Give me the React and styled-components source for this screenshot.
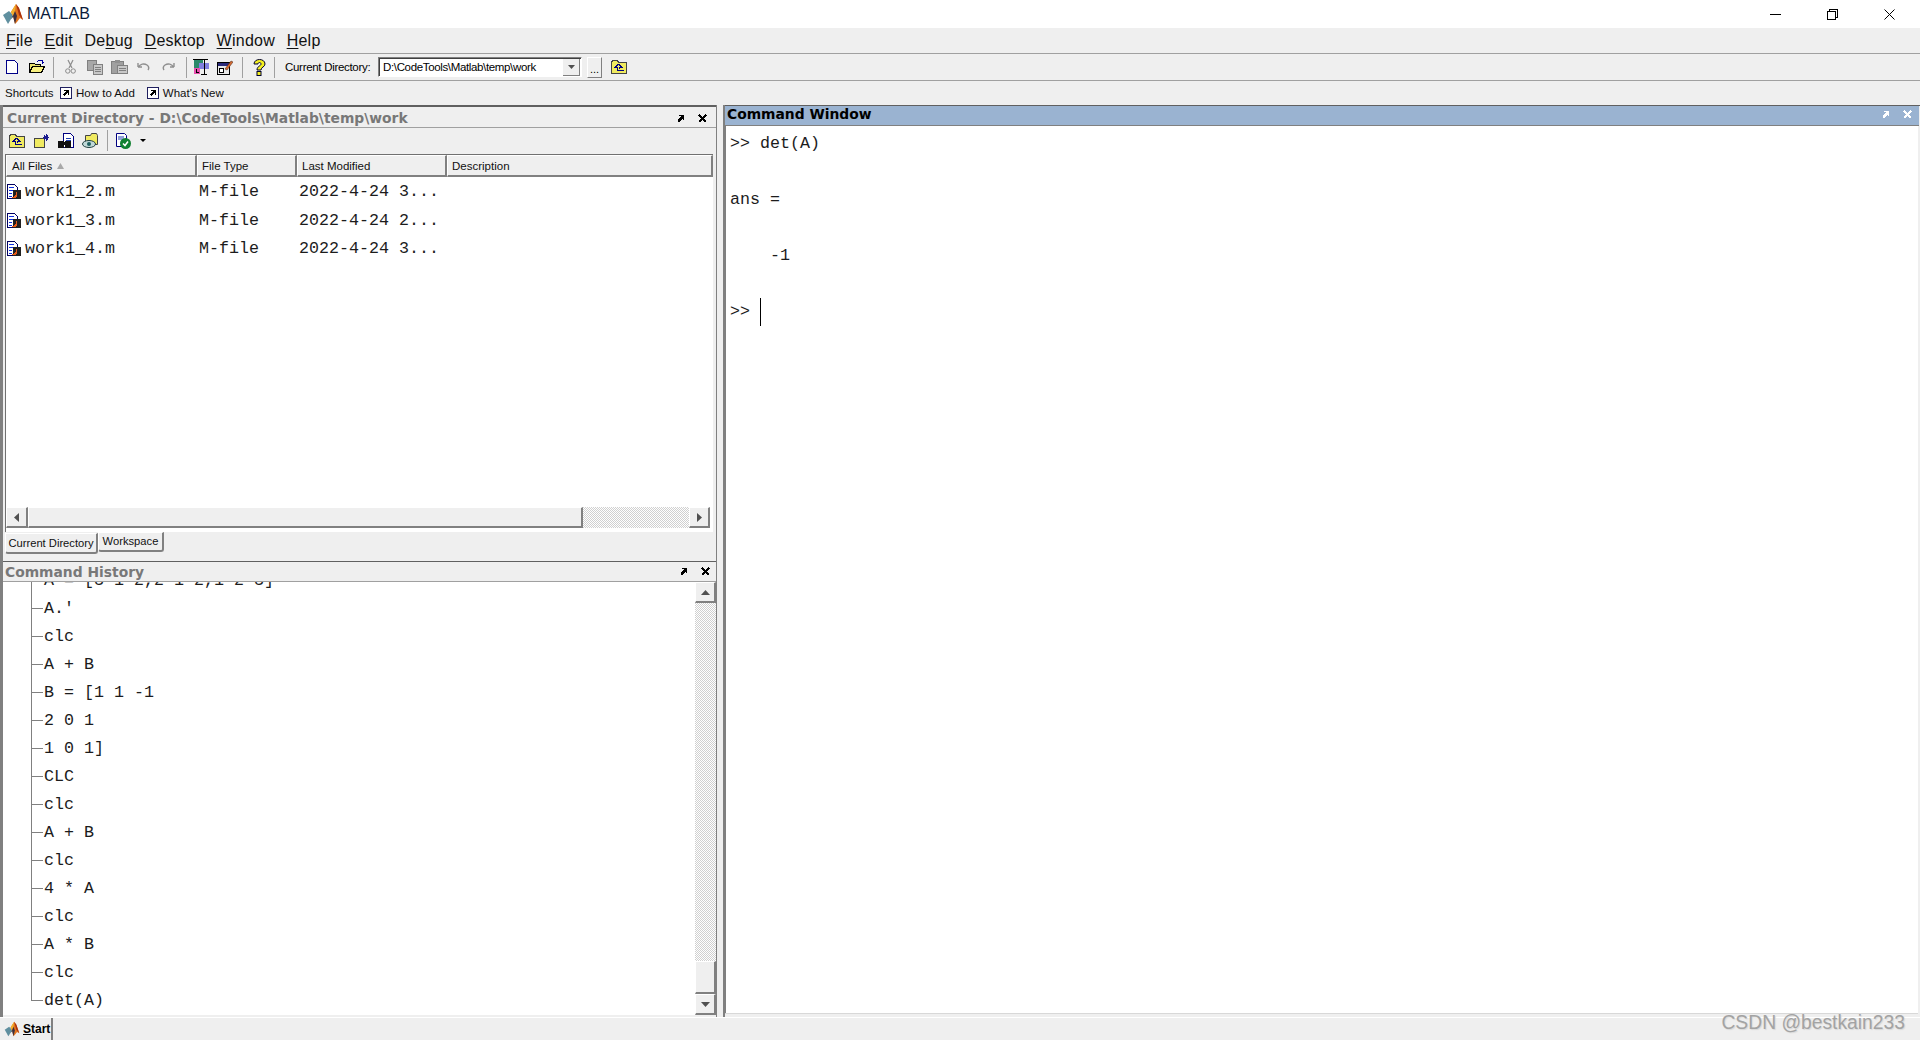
import React from 'react'
import styled, { createGlobalStyle } from 'styled-components'

const GlobalStyle = createGlobalStyle`
    html, body {
        margin: 0;
        padding: 0;
        background: #efefef;
        overflow: hidden;
    }
`

const MONO = '"Liberation Mono", "DejaVu Sans Mono", monospace'
const UI = '"Liberation Sans", Arial, sans-serif'
const TITLE = '"DejaVu Sans", Verdana, sans-serif'

const Page = styled.div`
    width: 1920px;
    height: 1040px;
    display: flex;
    flex-direction: column;
    position: relative;
    overflow: hidden;
    background: #efefef;
    font-family: ${UI};
    color: #000;
`

const TitleBar = styled.div`
    height: 28px;
    background: #fff;
    display: flex;
    align-items: center;
    padding: 0 2px;
`
const AppName = styled.span`
    font-size: 16px;
    color: #0a1a3a;
    margin-left: 3px;
    flex: 1;
`
const WinButton = styled.div`
    width: 57px;
    height: 28px;
    display: flex;
    align-items: center;
    justify-content: center;
`

const MenuBar = styled.div`
    height: 25px;
    border-bottom: 1px solid #a0a0a0;
    display: flex;
    align-items: center;
    gap: 11.6px;
    padding-left: 6px;
    font-size: 16px;
    letter-spacing: 0.25px;
    color: #111;
`
const MenuKey = styled.span`
    text-decoration: underline;
    text-underline-offset: 2px;
`

const ToolBar = styled.div`
    height: 26px;
    border-bottom: 1px solid #a0a0a0;
    display: flex;
    align-items: center;
`
const ToolButton = styled.div`
    width: 24.5px;
    height: 22px;
    display: flex;
    align-items: center;
    justify-content: center;
`
const Separator = styled.div`
    width: 1px;
    height: 21px;
    background: #a0a0a0;
    margin: 0 ${p => p.$after ?? 4}px 0 ${p => p.$before ?? 4}px;
`
const ToolLabel = styled.span`
    font-size: 11.5px;
    letter-spacing: -0.3px;
    width: 85px;
    white-space: nowrap;
    margin: 0 8px 0 10px;
`
const Combo = styled.div`
    width: 204px;
    height: 20px;
    box-sizing: border-box;
    background: #fff;
    border: 1px solid;
    border-color: #808080 #fff #fff #808080;
    box-shadow: inset 1px 1px 0 #404040;
    display: flex;
    align-items: center;
    justify-content: space-between;
    font-size: 11.5px;
    padding-left: 4px;
    letter-spacing: -0.35px;
`
const ComboArrow = styled.div`
    width: 17px;
    height: 17px;
    background: #efefef;
    border-right: 1px solid #808080;
    border-bottom: 1px solid #808080;
    box-sizing: border-box;
    margin-right: 1px;
    display: flex;
    align-items: center;
    justify-content: center;
`
const BrowseButton = styled.div`
    width: 15px;
    height: 21px;
    box-sizing: border-box;
    margin: 0 9px 0 5px;
    border: 1px solid;
    border-color: #fff #808080 #808080 #fff;
    font-size: 11px;
    text-align: center;
    line-height: 22px;
`

const ShortcutBar = styled.div`
    height: 24px;
    display: flex;
    align-items: center;
    padding-left: 5px;
    font-size: 11.5px;
    color: #111;
`
const ShortcutTitle = styled.span`
    width: 55px;
`
const ShortcutLink = styled.span`
    display: flex;
    align-items: center;
    gap: 4px;
    margin-right: 12px;
`

const Desk = styled.div`
    flex: 1;
    min-height: 0;
    display: flex;
`
const LeftColumn = styled.div`
    width: 717px;
    display: flex;
    flex-direction: column;
    border-left: 3px solid #808080;
    box-sizing: border-box;
    border-right: 1px solid #808080;
`
const Splitter = styled.div`
    width: 6px;
    border-right: 2px solid #808080;
`
const RightColumn = styled.div`
    flex: 1;
    display: flex;
    flex-direction: column;
    padding-right: 1px;
    border-top: 1px solid #606060;
`

const DirPanel = styled.div`
    height: 456px;
    flex: none;
    display: flex;
    flex-direction: column;
    border-top: 2px solid #606060;
    box-sizing: border-box;
`
const PanelTitle = styled.div`
    height: ${p => p.$h || 21}px;
    flex: none;
    box-sizing: border-box;
    display: flex;
    align-items: center;
    font-family: ${TITLE};
    font-weight: bold;
    font-size: 13.85px;
    padding: ${p => p.$drop ?? 0}px ${p => p.$inset ?? 0}px ${p => p.$lift ?? 0}px ${p => p.$lead ?? 2}px;
    color: ${p => (p.$active ? '#000' : '#787878')};
    background: ${p => (p.$active ? '#9ab3d1' : '#efefef')};
    border-bottom: 1px solid ${p => (p.$active ? '#808080' : '#a0a0a0')};
`
const TitleText = styled.span`
    flex: 1;
    white-space: pre;
`
const TitleIcon = styled.span`
    width: 22px;
    height: 12px;
    display: flex;
    align-items: center;
    justify-content: center;
`

const DirTools = styled.div`
    height: 25px;
    flex: none;
    display: flex;
    align-items: center;
    padding-left: 2px;
`
const DirTool = styled.div`
    width: 24.5px;
    display: flex;
    justify-content: center;
`
const DirMenuArrow = styled.div`
    margin-left: 4px;
`

const FileTable = styled.div`
    flex: none;
    height: 377px;
    margin: 1px 3px 0 2px;
    border-top: 1px solid #707070;
    border-left: 1px solid #707070;
    background: #fff;
    display: flex;
    flex-direction: column;
`
const HeaderRow = styled.div`
    display: grid;
    grid-template-columns: 191px 100px 150px 1fr;
    height: 22px;
    flex: none;
`
const HeaderCell = styled.div`
    box-sizing: border-box;
    background: #efefef;
    border: 1px solid;
    border-color: #fff #808080 #808080 #fff;
    border-width: 1px 2px 2px 1px;
    font-size: 11.5px;
    display: flex;
    align-items: center;
    gap: 5px;
    padding-left: ${p => p.$pad || 4}px;
    color: #111;
`
const FileList = styled.div`
    flex: 1;
`
const FileRow = styled.div`
    display: grid;
    grid-template-columns: 191px 100px 150px;
    height: 28.7px;
    align-items: center;
    font-family: ${MONO};
    font-size: 16.67px;
    color: #1c1c1c;
    white-space: pre;
`
const FileName = styled.div`
    display: flex;
    align-items: center;
    gap: 4px;
    padding-left: 1px;
`
const FileCell = styled.div`
    padding-left: 2px;
`

const HScroll = styled.div`
    height: 21px;
    flex: none;
    margin: 0 3px 4px 0;
    display: flex;
    align-items: stretch;
`
const ScrollButton = styled.div`
    box-sizing: border-box;
    width: ${p => p.$w || 21}px;
    height: ${p => (p.$vertical ? `${p.$h || 21}px` : 'auto')};
    flex: none;
    background: #efefef;
    border: solid;
    border-width: 1px 2px 2px 1px;
    border-color: #fff #808080 #808080 #fff;
    display: flex;
    align-items: center;
    justify-content: center;
`
const Track = styled.div`
    flex: 1;
    min-width: 0;
    min-height: 0;
    background-image: conic-gradient(#fff 25%, #d0d0d0 0 50%, #fff 0 75%, #d0d0d0 0);
    background-size: 2px 2px;
`
const HThumb = styled.div`
    box-sizing: border-box;
    flex: none;
    width: 555px;
    background: #efefef;
    border: solid;
    border-width: 1px 2px 2px 1px;
    border-color: #fff #808080 #808080 #fff;
`

const TabStrip = styled.div`
    height: 25px;
    flex: none;
    display: flex;
    align-items: flex-start;
    padding-left: 2px;
`
const Tab = styled.div`
    box-sizing: border-box;
    font-size: 11.2px;
    height: ${p => (p.$raised ? 20 : 21)}px;
    width: ${p => p.$w}px;
    margin-top: ${p => (p.$raised ? 0 : 1)}px;
    text-align: center;
    line-height: ${p => (p.$raised ? 17 : 19)}px;
    border: solid;
    border-width: 1px 2px 2px 1px;
    border-color: #fff #808080 #808080 #fff;
    border-radius: 0 0 3px 3px;
    color: #111;
`

const HistoryPanel = styled.div`
    flex: 1;
    min-height: 0;
    display: flex;
    flex-direction: column;
    border-top: 1px solid #606060;
`
const HistoryBody = styled.div`
    flex: none;
    height: 433px;
    display: flex;
    background: #fff;
`
const HistoryList = styled.div`
    flex: 1;
    min-width: 0;
    overflow: hidden;
    display: flex;
    flex-direction: column;
    justify-content: flex-end;
    padding-left: 28px;
`
const HistoryRow = styled.div`
    height: 28.02px;
    flex: none;
    display: flex;
    align-items: center;
    font-family: ${MONO};
    font-size: 16.67px;
    color: #1c1c1c;
    white-space: pre;
`
const Branch = styled.span`
    width: 12px;
    height: ${p => (p.$last ? '50%' : '100%')};
    align-self: flex-start;
    flex: none;
    box-sizing: border-box;
    border-left: 1px solid #808080;
    border-bottom: ${p => (p.$last ? '1px solid #808080' : 'none')};
    background: ${p => (p.$last ? 'none' : 'linear-gradient(#808080, #808080) 0 50% / 100% 1px no-repeat')};
    margin-right: 1px;
`
const VScroll = styled.div`
    width: 21px;
    flex: none;
    display: flex;
    flex-direction: column;
`

const CommandBody = styled.div`
    flex: 1;
    min-height: 0;
    background: #fff;
    border-left: 1px solid #808080;
    margin: 0 1px 4px 0;
    padding: 4px 0 0 4px;
    font-family: ${MONO};
    font-size: 16.67px;
    color: #1c1c1c;
    box-shadow: 0 1px 0 #d8d8d8;
`
const CommandLine = styled.div`
    height: 28px;
    line-height: 28px;
    white-space: pre;
    display: flex;
    align-items: center;
`
const Caret = styled.span`
    width: 1px;
    height: 28px;
    background: #000;
`

const StartBar = styled.div`
    height: 22px;
    flex: none;
    display: flex;
    border-top: 1px solid #fff;
`
const StartButton = styled.div`
    width: 53px;
    box-sizing: border-box;
    padding-left: 4px;
    display: flex;
    align-items: center;
    gap: 3px;
    font-size: 12px;
    font-weight: bold;
    border-right: 2px solid #808080;
`
const StartKey = styled.span`
    text-decoration: underline;
`
const Watermark = styled.div`
    position: absolute;
    right: 15px;
    bottom: 6px;
    font-size: 19.3px;
    color: #a3a3a3;
    text-shadow: 1px 1px 1px #d8d8d8;
`

const Icon = styled.svg`
    display: block;
    flex: none;
`

const MatlabLogo = ({ size = 22 }) => (
    <Icon width={size} height={size} viewBox="0 0 22 22">
        <polygon points="1,12 7,8 11,12 6,21" fill="#5f8f9f" />
        <polygon points="7,8 11,12 6,21 9,16 12,13" fill="#23404f" />
        <polygon points="9,9 14,1 17,5 21,17 18,15 15,19 13,21 11,13" fill="#e2731d" />
        <polygon points="14,1 17,5 21,17 17,12" fill="#a8300f" />
        <polygon points="9,9 14,1 13,8 11,13" fill="#f2b02c" />
        <polygon points="11,13 13,8 15,13 13,21" fill="#3a3040" />
    </Icon>
)

const NewIcon = () => (
    <Icon width="16" height="16" viewBox="0 0 16 16" shapeRendering="crispEdges">
        <path d="M2.500 1.500h8l3 3v10h-11z" fill="#fff" stroke="#000088" />
    </Icon>
)
const OpenIcon = () => (
    <Icon width="17" height="16" viewBox="0 0 17 16" shapeRendering="crispEdges">
        <path d="M1.500 4.500h5l1 1h5v8h-11z" fill="#e8e070" stroke="#000" />
        <path d="M1.500 13.500l3-6h12l-3 6z" fill="#f8f080" stroke="#000" />
        <path d="M9 3l2-2h3v2l2 0-2 2" fill="none" stroke="#0000a0" />
    </Icon>
)
const CutIcon = () => (
    <Icon width="11" height="16" viewBox="0 0 11 16">
        <path d="M3 1l4 8M8 1L4 9" stroke="#8c8c8c" strokeWidth="1.200" fill="none" />
        <circle cx="2.800" cy="12" r="2.200" fill="none" stroke="#8c8c8c" />
        <circle cx="8.200" cy="12" r="2.200" fill="none" stroke="#8c8c8c" />
    </Icon>
)
const CopyIcon = () => (
    <Icon width="16" height="15" viewBox="0 0 16 15" shapeRendering="crispEdges">
        <rect x="0.500" y="0.500" width="9" height="10" fill="#a8a8a8" stroke="#808080" />
        <rect x="6.500" y="4.500" width="9" height="10" fill="#c8c8c8" stroke="#808080" />
        <path d="M8 7.500h6M8 9.500h6M8 11.500h6" stroke="#808080" />
    </Icon>
)
const PasteIcon = () => (
    <Icon width="17" height="16" viewBox="0 0 17 16" shapeRendering="crispEdges">
        <rect x="0.500" y="2.500" width="12" height="12" fill="#a0a0a0" stroke="#808080" />
        <rect x="4" y="0.500" width="5" height="3" fill="#909090" />
        <rect x="6.500" y="6.500" width="10" height="8" fill="#c8c8c8" stroke="#808080" />
        <path d="M8 9.500h7M8 11.500h7" stroke="#808080" />
    </Icon>
)
const UndoIcon = ({ flip }) => (
    <Icon width="13" height="10" viewBox="0 0 13 10" style={flip ? { transform: 'scaleX(-1)' } : undefined}>
        <path d="M1 5l0-4M1 5h4M1.500 5C3 2 7 1 10 3c2 1.500 2 3.500 1 5" fill="none" stroke="#8f8f8f" strokeWidth="1.400" />
    </Icon>
)
const SimulinkIcon = () => (
    <Icon width="16" height="18" viewBox="0 0 16 18" shapeRendering="crispEdges">
        <rect x="1" y="1" width="9" height="9" fill="#2a8a6a" />
        <rect x="6" y="5" width="10" height="6" fill="#8080e0" />
        <circle cx="4" cy="13" r="3.500" fill="#e850b0" />
        <path d="M0 1.500h15M11 1v16M8 16.500h6M3 11v3h3" stroke="#000" fill="none" />
    </Icon>
)
const GuideIcon = () => (
    <Icon width="16" height="16" viewBox="0 0 16 16" shapeRendering="crispEdges">
        <rect x="0.500" y="3.500" width="12" height="12" fill="#e8e8e8" stroke="#000" />
        <rect x="1" y="4" width="11" height="3" fill="#2a2a7a" />
        <rect x="2" y="9" width="4" height="4" fill="#fff" stroke="#000" />
        <path d="M8 10l6-8 2 1-6 8z" fill="#d86a30" stroke="#402010" strokeWidth="0.500" shapeRendering="auto" />
    </Icon>
)
const HelpIcon = () => (
    <Icon width="14" height="17" viewBox="0 0 14 17">
        <path d="M2 5c0-6 11-6 11 0 0 3-4 3-4 6H5c0-4 4-4 4-6 0-2-3-2-3 0z" fill="#f4f020" stroke="#000030" strokeWidth="1" />
        <rect x="5" y="12.500" width="4" height="4" fill="#f4f020" stroke="#000030" />
    </Icon>
)
const UpFolderIcon = () => (
    <Icon width="16" height="14" viewBox="0 0 16 14" shapeRendering="crispEdges">
        <path d="M0.500 2.500l1-2h5l1 2h8v11h-15z" fill="#f0ea60" stroke="#444" />
        <path d="M7.500 4l-3 3h2v3h6M7.500 4l3 3h-2v2" fill="none" stroke="#000080" />
    </Icon>
)
const NewFolderIcon = () => (
    <Icon width="16" height="14" viewBox="0 0 16 14" shapeRendering="crispEdges">
        <path d="M0.500 4.500h10v9h-10z" fill="#f0ea60" stroke="#444" />
        <path d="M12 0v7M9 3.500h6M10 1.500l4 4M14 1.500l-4 4" stroke="#1c1c90" />
    </Icon>
)
const FindIcon = () => (
    <Icon width="16" height="16" viewBox="0 0 16 16" shapeRendering="crispEdges">
        <path d="M5.500 0.500h7l3 3v11h-10z" fill="#fff" stroke="#000080" />
        <path d="M8 5.500h5M8 7.500h5" stroke="#2040b0" />
        <rect x="0" y="8" width="6" height="7" fill="#111" />
        <rect x="7" y="8" width="6" height="7" fill="#111" />
        <rect x="5" y="9" width="3" height="3" fill="#111" />
    </Icon>
)
const ViewFolderIcon = () => (
    <Icon width="17" height="16" viewBox="0 0 17 16">
        <path d="M3.500 2.500h5l1-2h5l1 2v9h-12z" fill="#f0ea60" stroke="#444" />
        <ellipse cx="7" cy="11" rx="6.500" ry="3.500" fill="#c0d8d8" stroke="#204040" />
        <circle cx="7" cy="11" r="2" fill="#206060" />
    </Icon>
)
const CheckDocIcon = () => (
    <Icon width="17" height="16" viewBox="0 0 17 16">
        <path d="M1.500 0.500h8l2 2v11h-10z" fill="#fff" stroke="#000080" />
        <path d="M3 4h6M3 6h6" stroke="#2040b0" />
        <circle cx="10.500" cy="10.500" r="5.500" fill="#108030" />
        <path d="M8 10.500l2 2 3-4" fill="none" stroke="#fff" strokeWidth="1.500" />
    </Icon>
)
const MFileIcon = () => (
    <Icon width="14" height="15" viewBox="0 0 14 15" shapeRendering="crispEdges">
        <path d="M0.500 0.500h7l3 3v11h-10z" fill="#fff" stroke="#000060" />
        <path d="M2 3.500h5M2 6.500h4M2 9.500h3M2 12.500h3" stroke="#1030e0" />
        <rect x="6" y="6" width="8" height="9" fill="#202020" />
        <path d="M10 8l-1 5h-2l3-2" fill="none" stroke="#e85a18" />
    </Icon>
)
const ShortcutIcon = () => (
    <Icon width="12" height="12" viewBox="0 0 12 12" shapeRendering="crispEdges">
        <rect x="0.500" y="0.500" width="11" height="11" fill="#fff" stroke="#202060" />
        <path d="M4 3h5v5H8V5.500L4.500 9 3 7.500 6.500 4H4z" fill="#000" />
    </Icon>
)
const DockIcon = ({ color = '#000' }) => (
    <Icon width="9" height="9" viewBox="0 0 9 9" shapeRendering="crispEdges">
        <path d="M3 1h5v5H7V4L3 8H2V7L1 6l4-4H3z" fill={color} />
    </Icon>
)
const CloseIcon = ({ color = '#000' }) => (
    <Icon width="9" height="9" viewBox="0 0 9 9" shapeRendering="crispEdges">
        <path d="M1 1l7 7M8 1L1 8" stroke={color} strokeWidth="1.600" />
    </Icon>
)
const Tri = ({ dir = 'down', color = '#505050', w = 9, h = 5 }) => {
    const points = {
        down: `0,0 ${w},0 ${w / 2},${h}`,
        up: `${w / 2},0 ${w},${h} 0,${h}`,
        left: `${w},0 ${w},${h} 0,${h / 2}`,
        right: `0,0 ${w},${h / 2} 0,${h}`,
    }
    return (
        <Icon width={w} height={h} viewBox={`0 0 ${w} ${h}`}>
            <polygon points={points[dir]} fill={color} />
        </Icon>
    )
}

const menus = [['F', 'ile'], ['E', 'dit'], ['De', 'b', 'ug'], ['D', 'esktop'], ['W', 'indow'], ['H', 'elp']]

const files = [
    ['work1_2.m', '2022-4-24 3...'],
    ['work1_3.m', '2022-4-24 2...'],
    ['work1_4.m', '2022-4-24 3...'],
]

const history = [
    'A = [3 1 2,2 1 2,1 2 3]', "A.'", 'clc', 'A + B', 'B = [1 1 -1', '2 0 1', '1 0 1]', 'CLC', 'clc',
    'A + B', 'clc', '4 * A', 'clc', 'A * B', 'clc', 'det(A)',
]

const commands = ['>> det(A)', '', 'ans =', '', '    -1', '']

export default function App() {
    return (
        <Page>
            <GlobalStyle />
            <TitleBar>
                <MatlabLogo />
                <AppName>MATLAB</AppName>
                <WinButton>
                    <Icon width="11" height="11" viewBox="0 0 11 11" shapeRendering="crispEdges"><path d="M0 5.500h11" stroke="#000" /></Icon>
                </WinButton>
                <WinButton>
                    <Icon width="11" height="11" viewBox="0 0 11 11" shapeRendering="crispEdges"><path d="M0.500 2.500h8v8h-8zM2.500 2V0.500h8v8H9" fill="none" stroke="#000" /></Icon>
                </WinButton>
                <WinButton>
                    <Icon width="11" height="11" viewBox="0 0 11 11"><path d="M0.500 0.500l10 10M10.500 0.500l-10 10" stroke="#000" /></Icon>
                </WinButton>
            </TitleBar>

            <MenuBar>
                {menus.map(m => (
                    <span key={m.join('')}>
                        {m.length === 3 ? <>{m[0]}<MenuKey>{m[1]}</MenuKey>{m[2]}</> : <><MenuKey>{m[0]}</MenuKey>{m[1]}</>}
                    </span>
                ))}
            </MenuBar>

            <ToolBar>
                <ToolButton><NewIcon /></ToolButton>
                <ToolButton><OpenIcon /></ToolButton>
                <Separator />
                <ToolButton><CutIcon /></ToolButton>
                <ToolButton><CopyIcon /></ToolButton>
                <ToolButton><PasteIcon /></ToolButton>
                <ToolButton><UndoIcon /></ToolButton>
                <ToolButton><UndoIcon flip /></ToolButton>
                <Separator $before={5} $after={2} />
                <ToolButton><SimulinkIcon /></ToolButton>
                <ToolButton><GuideIcon /></ToolButton>
                <Separator />
                <ToolButton><HelpIcon /></ToolButton>
                <Separator $before={3} $after={0} />
                <ToolLabel>Current Directory:</ToolLabel>
                <Combo>
                    <span>D:\CodeTools\Matlab\temp\work</span>
                    <ComboArrow><Tri w={7} h={4} /></ComboArrow>
                </Combo>
                <BrowseButton>...</BrowseButton>
                <UpFolderIcon />
            </ToolBar>

            <ShortcutBar>
                <ShortcutTitle>Shortcuts</ShortcutTitle>
                <ShortcutLink><ShortcutIcon />How to Add</ShortcutLink>
                <ShortcutLink><ShortcutIcon />What's New</ShortcutLink>
            </ShortcutBar>

            <Desk>
                <LeftColumn>
                    <DirPanel>
                        <PanelTitle $lead={4} $inset={3} $drop={2}>
                            <TitleText>Current Directory - D:\CodeTools\Matlab\temp\work</TitleText>
                            <TitleIcon><DockIcon /></TitleIcon>
                            <TitleIcon><CloseIcon /></TitleIcon>
                        </PanelTitle>
                        <DirTools>
                            <DirTool><UpFolderIcon /></DirTool>
                            <DirTool><NewFolderIcon /></DirTool>
                            <DirTool><FindIcon /></DirTool>
                            <DirTool><ViewFolderIcon /></DirTool>
                            <Separator $before={4} $after={3} />
                            <DirTool><CheckDocIcon /></DirTool>
                            <DirMenuArrow><Tri color="#000" w={6} h={3} /></DirMenuArrow>
                        </DirTools>
                        <FileTable>
                            <HeaderRow>
                                <HeaderCell $pad={5}>All Files <Tri dir="up" color="#a8a8a8" w={7} h={6} /></HeaderCell>
                                <HeaderCell>File Type</HeaderCell>
                                <HeaderCell>Last Modified</HeaderCell>
                                <HeaderCell>Description</HeaderCell>
                            </HeaderRow>
                            <FileList>
                                {files.map(([name, modified]) => (
                                    <FileRow key={name}>
                                        <FileName><MFileIcon />{name}</FileName>
                                        <FileCell>M-file</FileCell>
                                        <FileCell>{modified}</FileCell>
                                    </FileRow>
                                ))}
                            </FileList>
                            <HScroll>
                                <ScrollButton $w={22}><Tri dir="left" w={5} h={9} /></ScrollButton>
                                <HThumb />
                                <Track />
                                <ScrollButton><Tri dir="right" w={5} h={9} /></ScrollButton>
                            </HScroll>
                        </FileTable>
                        <TabStrip>
                            <Tab $w={93}>Current Directory</Tab>
                            <Tab $raised $w={66}>Workspace</Tab>
                        </TabStrip>
                    </DirPanel>

                    <HistoryPanel>
                        <PanelTitle $lead={2} $h={20}>
                            <TitleText>Command History</TitleText>
                            <TitleIcon><DockIcon /></TitleIcon>
                            <TitleIcon><CloseIcon /></TitleIcon>
                        </PanelTitle>
                        <HistoryBody>
                            <HistoryList>
                                {history.map((line, i) => (
                                    <HistoryRow key={i}>
                                        <Branch $last={i === history.length - 1} />
                                        {line}
                                    </HistoryRow>
                                ))}
                            </HistoryList>
                            <VScroll>
                                <ScrollButton $vertical $w={21}><Tri dir="up" w={9} h={5} /></ScrollButton>
                                <Track />
                                <ScrollButton $vertical $w={21} $h={33} />
                                <ScrollButton $vertical $w={21}><Tri dir="down" w={9} h={5} /></ScrollButton>
                            </VScroll>
                        </HistoryBody>
                    </HistoryPanel>
                </LeftColumn>

                <Splitter />

                <RightColumn>
                    <PanelTitle $active $h={20} $inset={1} $lead={2} $lift={3}>
                        <TitleText>Command Window</TitleText>
                        <TitleIcon><DockIcon color="#fff" /></TitleIcon>
                        <TitleIcon><CloseIcon color="#fff" /></TitleIcon>
                    </PanelTitle>
                    <CommandBody>
                        {commands.map((line, i) => <CommandLine key={i}>{line}</CommandLine>)}
                        <CommandLine>{'>> '}<Caret /></CommandLine>
                    </CommandBody>
                </RightColumn>
            </Desk>

            <StartBar>
                <StartButton><MatlabLogo size={16} /><span><StartKey>S</StartKey>tart</span></StartButton>
            </StartBar>
            <Watermark>CSDN @bestkain233</Watermark>
        </Page>
    )
}
